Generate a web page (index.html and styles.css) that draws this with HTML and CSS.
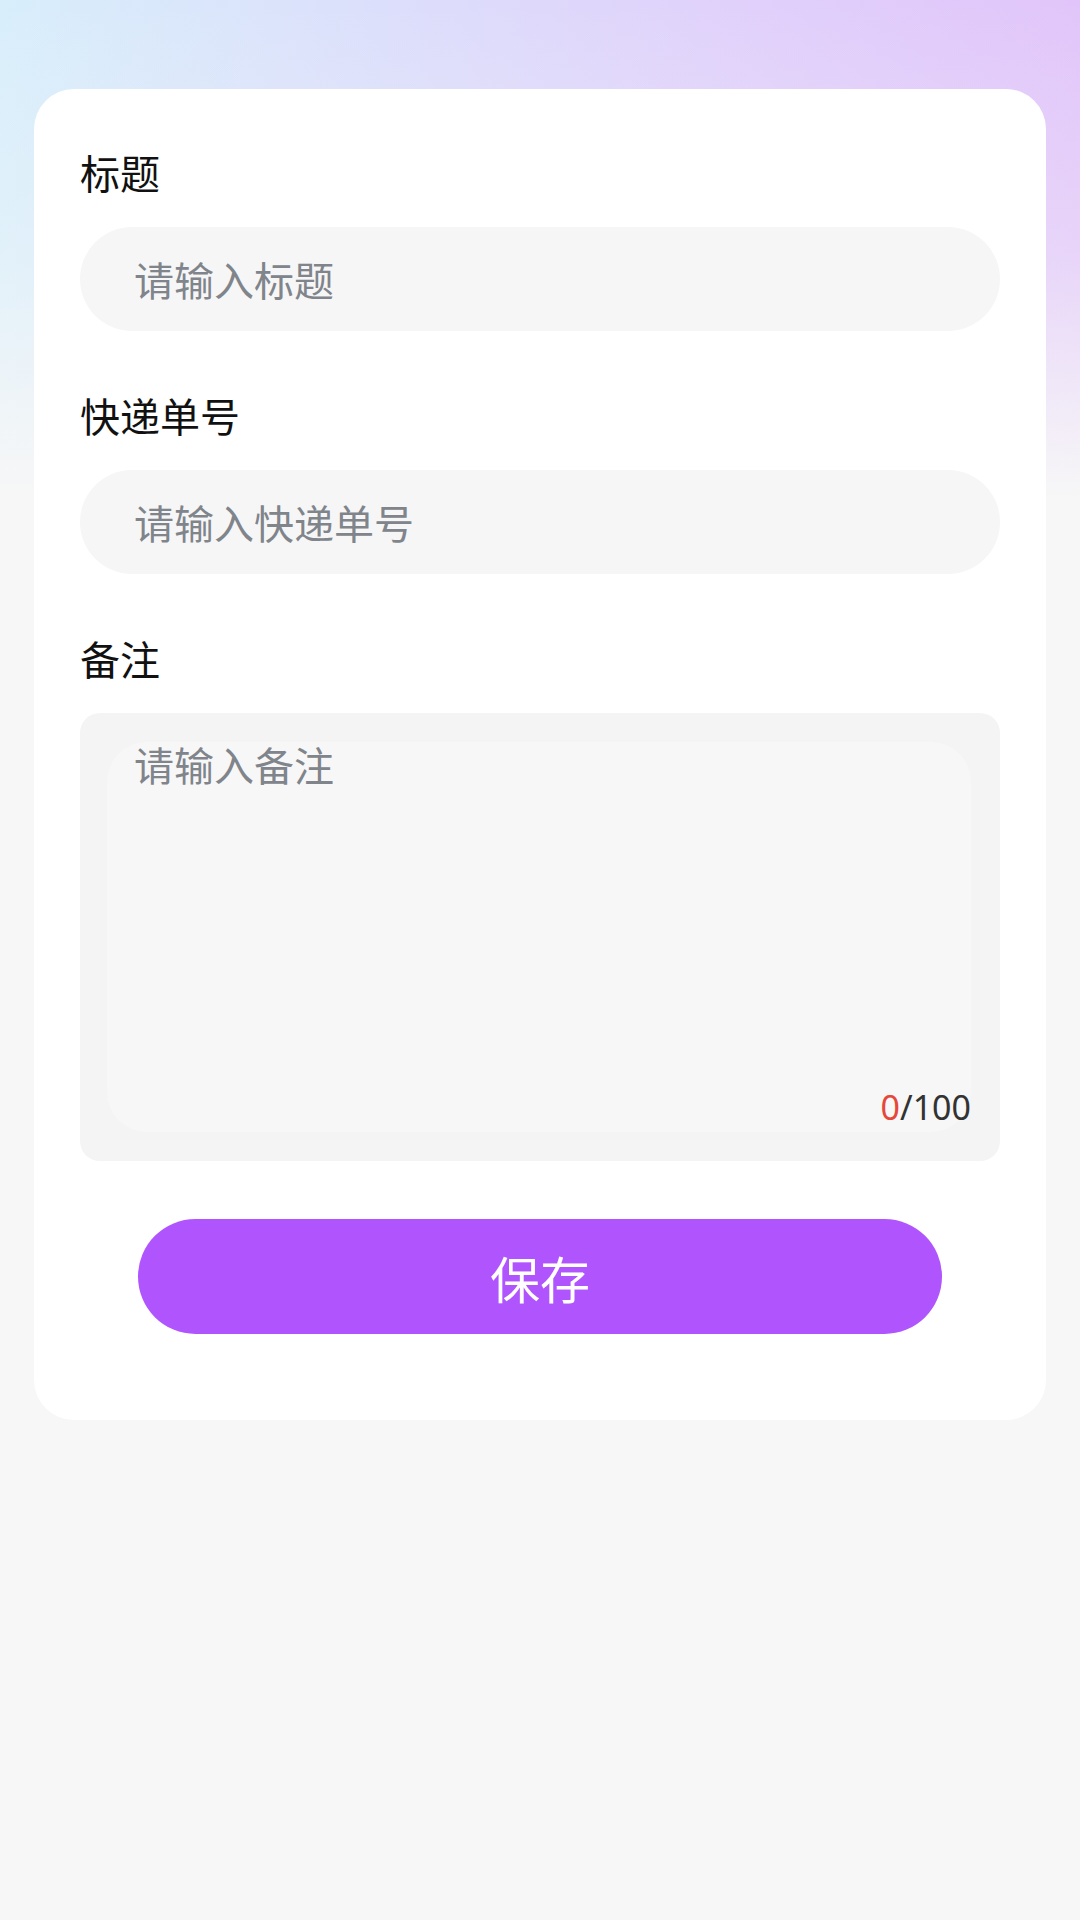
FILE: index.html
```html
<!DOCTYPE html>
<html lang="zh-CN">
<head>
    <meta charset="UTF-8">
    <meta name="viewport" content="width=device-width, initial-scale=1.0">
    <title>添加快递</title>
    <link rel="stylesheet" href="styles.css">
</head>
<body>
    <div class="pagina">
        <form class="tarjeta">
            <label class="campo-titulo" for="titulo">标题</label>
            <input class="entrada" id="titulo" type="text" placeholder="请输入标题">

            <label class="campo-titulo" for="numero">快递单号</label>
            <input class="entrada" id="numero" type="text" placeholder="请输入快递单号">

            <label class="campo-titulo" for="nota">备注</label>
            <div class="nota">
                <div class="nota-interior">
                    <textarea class="nota-texto" id="nota" maxlength="100" placeholder="请输入备注"></textarea>
                    <div class="contador"><span class="contador-actual">0</span>/100</div>
                </div>
            </div>

            <button class="boton-guardar" type="button">保存</button>
        </form>
    </div>
</body>
</html>
```

FILE: styles.css
```css
body {
    margin: 0;
    min-height: 1920px;
    background-color: #f7f7f7;
    background-image:
        linear-gradient(to bottom, rgba(247, 247, 247, 0) 0%, rgba(247, 247, 247, 0.3) 50%, #f7f7f7 100%),
        linear-gradient(to right, #d8eefb 0%, #dcdffb 35%, #e0d2fb 65%, #e1c5fa 100%);
    background-size: 100% 500px, 100% 500px;
    background-repeat: no-repeat;
    font-family: "Noto Sans", "Noto Sans CJK SC", sans-serif;
}
.pagina {
    padding: 89px 34px 0;
}
.tarjeta {
    display: flex;
    flex-direction: column;
    background: #ffffff;
    border-radius: 40px;
    padding: 57px 46px 86px;
}
.campo-titulo {
    font-family: "Noto Sans CJK SC", sans-serif;
    font-size: 40px;
    line-height: 53px;
    color: #111111;
    margin-bottom: 28px;
}
.entrada {
    box-sizing: border-box;
    height: 104px;
    border: none;
    border-radius: 52px;
    background: #f6f6f6;
    padding: 0 54px;
    margin-bottom: 58px;
    font-family: "Noto Sans CJK SC", sans-serif;
    font-size: 40px;
    color: #333333;
    outline: none;
}
.entrada::placeholder,
.nota-texto::placeholder {
    color: #80848b;
}
.nota {
    box-sizing: border-box;
    height: 448px;
    background: #f4f4f4;
    border-radius: 20px;
    padding: 29px 29px 29px 27px;
    display: flex;
}
.nota-interior {
    flex: 1;
    display: flex;
    flex-direction: column;
    background: #f7f7f7;
    border-radius: 40px;
    padding: 0 0 3px 27px;
}
.nota-texto {
    flex: 1;
    border: none;
    background: transparent;
    resize: none;
    padding: 0;
    margin-top: -4px;
    font-family: "Noto Sans CJK SC", sans-serif;
    font-size: 40px;
    line-height: 53px;
    color: #333333;
    outline: none;
}
.contador {
    text-align: right;
    font-size: 34px;
    line-height: 43px;
    color: #333333;
}
.contador-actual {
    color: #e5483a;
}
.boton-guardar {
    align-self: center;
    width: 804px;
    height: 115px;
    margin-top: 58px;
    border: none;
    border-radius: 58px;
    background: #b055fd;
    color: #ffffff;
    font-family: "Noto Sans CJK SC", sans-serif;
    font-size: 50px;
    cursor: pointer;
}
```
